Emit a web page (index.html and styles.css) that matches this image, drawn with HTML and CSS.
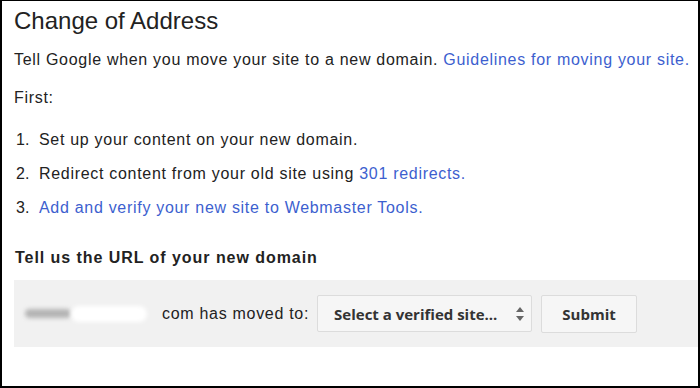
FILE: index.html
```html
<!DOCTYPE html>
<html lang="en">
<head>
  <meta charset="UTF-8">
  <title>Change of Address</title>
  <link rel="stylesheet" href="styles.css">
</head>
<body>
  <div class="frame">
    <h1>Change of Address</h1>
    <p class="intro">Tell Google when you move your site to a new domain. <a href="#">Guidelines for moving your site.</a></p>
    <p class="first">First:</p>

    <ol class="steps">
      <li><span class="num">1.</span>Set up your content on your new domain.</li>
      <li><span class="num">2.</span>Redirect content from your old site using <a href="#">301 redirects.</a></li>
      <li><span class="num">3.</span><a href="#">Add and verify your new site to Webmaster Tools.</a></li>
    </ol>

    <h2>Tell us the URL of your new domain</h2>

    <div class="move-box">
      <span class="old-domain"><span class="blur-gray"></span><span class="blur-white"></span></span>
      <span class="moved-text">com has moved to:</span>
      <div class="select">
        <span>Select a verified site...</span>
        <svg class="arrows" width="10" height="16" viewBox="0 0 10 16">
          <path d="M5 1 L9 6 H1 Z" fill="#666"/>
          <path d="M5 15 L9 10 H1 Z" fill="#666"/>
        </svg>
      </div>
      <button class="submit">Submit</button>
    </div>
  </div>
</body>
</html>
```

FILE: styles.css
```css
body {
  margin: 0;
  font-family: "Liberation Sans", Arial, sans-serif;
  color: #222;
  background-color: #fff;
}

.frame {
  height: 388px;
  box-sizing: border-box;
  border: 2px solid #000;
  border-top-width: 1px;
  padding: 0 0 0 12px;
  overflow: hidden;
}

a {
  color: #3d5fcf;
  text-decoration: none;
}

h1 {
  font-size: 24px;
  font-weight: normal;
  margin: 5px 0 0 0;
  line-height: 30px;
}

.intro,
.first,
.steps,
.moved-text {
  font-size: 16px;
  letter-spacing: 0.7px;
}

.intro {
  margin: 14px 0 0 0;
  line-height: 20px;
}

.first {
  margin: 18px 0 0 0;
  line-height: 20px;
}

.steps {
  list-style: none;
  margin: 22px 0 0 0;
  padding: 0;
  line-height: 20px;
}

.steps li {
  margin-bottom: 14px;
}

.steps .num {
  display: inline-block;
  width: 23px;
  padding-left: 2px;
  letter-spacing: 0;
}

h2 {
  font-size: 16px;
  font-weight: bold;
  letter-spacing: 0.95px;
  margin: 30px 0 0 1px;
  line-height: 20px;
}

.move-box {
  display: flex;
  align-items: center;
  height: 67px;
  margin-top: 12px;
  background-color: #f1f1f1;
  padding-left: 11px;
}

.old-domain {
  display: flex;
  align-items: center;
  width: 124px;
  height: 16px;
  margin-right: 13px;
}

.blur-gray {
  width: 46px;
  height: 9px;
  background-color: #b4b4b4;
  border-radius: 5px;
  filter: blur(2px);
}

.blur-white {
  width: 76px;
  height: 16px;
  background-color: #fff;
  border-radius: 8px;
  filter: blur(2px);
}

.moved-text {
  margin-right: 8px;
}

.select {
  display: flex;
  align-items: center;
  justify-content: space-between;
  width: 215px;
  height: 37px;
  box-sizing: border-box;
  padding: 0 6px 0 16px;
  background-color: #f6f6f6;
  border: 1px solid #dcdcdc;
  border-radius: 2px;
  font-family: "Open Sans", sans-serif;
  font-weight: 700;
  font-size: 15px;
  color: #333;
}

.submit {
  width: 96px;
  height: 38px;
  margin-left: 9px;
  background-color: #f6f6f6;
  border: 1px solid #dcdcdc;
  border-radius: 2px;
  font-family: "Open Sans", sans-serif;
  font-weight: 700;
  font-size: 15px;
  color: #333;
  cursor: pointer;
}
```
